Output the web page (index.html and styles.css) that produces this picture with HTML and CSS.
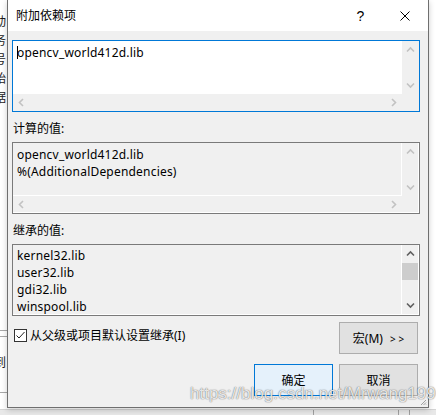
FILE: index.html
```html
<!DOCTYPE html>
<html lang="zh-CN">
<head>
    <meta charset="UTF-8">
    <title>附加依赖项</title>
    <link rel="stylesheet" href="styles.css">
</head>
<body>
    <!-- the window behind the dialog, only its edges show -->
    <div class="desktop">
        <div class="bg-glyphs bg-glyphs-top">
            <span>动</span><span>务</span><span>号</span><span>始</span><span>据</span>
        </div>
        <div class="bg-hline bg-hline-a"></div>
        <div class="bg-hline bg-hline-b"></div>
        <div class="bg-glyphs bg-glyphs-low"><span>到</span></div>
        <div class="bg-hline bg-hline-c"></div>
        <div class="bg-bottom">
            <div class="bg-vline bg-vline-a"></div>
            <div class="bg-vline bg-vline-b"></div>
            <div class="bg-vline bg-vline-c"></div>
        </div>
    </div>

    <div class="dialog">
        <div class="titlebar">
            <span class="title">附加依赖项</span>
            <span class="title-btn help">?</span>
            <span class="title-btn">
                <svg width="10" height="10" viewBox="0 0 10 10">
                    <path d="M0.5 0.5 L9.5 9.5 M9.5 0.5 L0.5 9.5" stroke="#000" stroke-width="1" fill="none"/>
                </svg>
            </span>
        </div>

        <div class="content">
            <div class="box box-edit">
                <div class="box-text"><span class="caret"></span>opencv_world412d.lib</div>
                <div class="vscroll">
                    <svg class="arrow" width="17" height="17" viewBox="0 0 17 17"><path d="M5 10.5 L8.5 7 L12 10.5"/></svg>
                    <svg class="arrow" width="17" height="17" viewBox="0 0 17 17"><path d="M5 6.5 L8.5 10 L12 6.5"/></svg>
                </div>
                <div class="hscroll">
                    <svg class="arrow" width="17" height="17" viewBox="0 0 17 17"><path d="M10 5 L6.5 8.5 L10 12"/></svg>
                    <svg class="arrow" width="17" height="17" viewBox="0 0 17 17"><path d="M7 5 L10.5 8.5 L7 12"/></svg>
                </div>
                <div class="corner"></div>
            </div>

            <div class="label">计算的值:</div>
            <div class="box box-readonly">
                <div class="box-text">
                    <div>opencv_world412d.lib</div>
                    <div>%(AdditionalDependencies)</div>
                </div>
                <div class="vscroll">
                    <svg class="arrow" width="17" height="17" viewBox="0 0 17 17"><path d="M5 10.5 L8.5 7 L12 10.5"/></svg>
                    <svg class="arrow" width="17" height="17" viewBox="0 0 17 17"><path d="M5 6.5 L8.5 10 L12 6.5"/></svg>
                </div>
                <div class="hscroll">
                    <svg class="arrow" width="17" height="17" viewBox="0 0 17 17"><path d="M10 5 L6.5 8.5 L10 12"/></svg>
                    <svg class="arrow" width="17" height="17" viewBox="0 0 17 17"><path d="M7 5 L10.5 8.5 L7 12"/></svg>
                </div>
                <div class="corner"></div>
            </div>

            <div class="label">继承的值:</div>
            <div class="box box-list">
                <div class="box-text">
                    <div>kernel32.lib</div>
                    <div>user32.lib</div>
                    <div>gdi32.lib</div>
                    <div>winspool.lib</div>
                </div>
                <div class="vscroll vscroll-active">
                    <svg class="arrow" width="17" height="17" viewBox="0 0 17 17"><path d="M5 10.5 L8.5 7 L12 10.5"/></svg>
                    <div class="thumb"></div>
                    <svg class="arrow arrow-down" width="17" height="17" viewBox="0 0 17 17"><path d="M5 6.5 L8.5 10 L12 6.5"/></svg>
                </div>
            </div>

            <div class="row-macro">
                <label class="inherit">
                    <span class="checkbox">
                        <svg width="11" height="11" viewBox="0 0 11 11">
                            <path d="M1.5 5.5 L4 8 L9.5 2" stroke="#222" stroke-width="1" fill="none"/>
                        </svg>
                    </span>
                    从父级或项目默认设置继承(I)
                </label>
                <button class="btn">宏(M) <span class="chevrons">&gt; &gt;</span></button>
            </div>

            <div class="row-actions">
                <button class="btn btn-default">确定</button>
                <button class="btn">取消</button>
            </div>
        </div>

        <svg class="grip" width="7" height="7" viewBox="0 0 7 7">
            <path d="M6 1 L1 6 M6 3.5 L3.5 6 M6 5.5 L5.5 6" stroke="#a0a0a0" stroke-width="1" fill="none"/>
        </svg>
    </div>

    <div class="watermark">https://blog.csdn.net/Mrwang1996</div>
</body>
</html>
```

FILE: styles.css
```css
body {
    margin: 0;
    width: 436px;
    height: 415px;
    overflow: hidden;
    position: relative;
    background-color: #fff;
    font-family: "Noto Sans", "Noto Sans CJK SC", sans-serif;
    font-size: 12px;
    color: #000;
}

/* background window */
.desktop {
    position: absolute;
    left: 0;
    top: 0;
    width: 436px;
    height: 415px;
}
.bg-glyphs {
    position: absolute;
    left: -6px;
    font-family: "Noto Sans CJK SC", sans-serif;
    font-size: 12px;
    line-height: 19px;
    color: #1a1a1a;
}
.bg-glyphs span {
    display: block;
}
.bg-glyphs-top {
    top: 11px;
}
.bg-glyphs-low {
    top: 352px;
}
.bg-hline {
    position: absolute;
    left: 0;
    width: 8px;
    height: 1px;
    background-color: #a8a8a8;
}
.bg-hline-a {
    top: 330px;
}
.bg-hline-b {
    top: 336px;
}
.bg-hline-c {
    top: 392px;
}
.bg-bottom {
    position: absolute;
    left: 0;
    top: 409px;
    width: 436px;
    height: 6px;
    background-color: #e8e8e8;
    border-top: 1px solid #d4d4d4;
}
.bg-vline {
    position: absolute;
    top: 0;
    width: 1px;
    height: 6px;
    background-color: #a0a0a0;
}
.bg-vline-a {
    left: 313px;
}
.bg-vline-b {
    left: 398px;
}
.bg-vline-c {
    left: 409px;
}

/* dialog */
.dialog {
    position: absolute;
    left: 7px;
    top: 0;
    width: 420px;
    height: 407px;
    border: 1px solid #6f6f6f;
    border-top: none;
    background-color: #f0f0f0;
    box-shadow: 0 2px 6px rgba(0,0,0,0.2);
    display: flex;
    flex-direction: column;
}
.titlebar {
    height: 31px;
    background-color: #fff;
    display: flex;
    align-items: center;
    padding-left: 8px;
}
.title {
    flex: 1;
    line-height: 17px;
    margin-top: -1px;
}
.title-btn {
    width: 46px;
    height: 31px;
    display: flex;
    align-items: center;
    justify-content: center;
}
.help {
    font-family: "Liberation Sans", sans-serif;
    font-size: 14px;
    padding-left: 3px;
    box-sizing: border-box;
}

.content {
    padding: 9px 8px 0 4px;
}
.label {
    line-height: 17px;
    margin: 8px 0 5px;
    padding-left: 1px;
}

/* list / edit boxes */
.box {
    height: 72px;
    box-sizing: border-box;
    border: 1px solid #7a7a7a;
    display: grid;
    grid-template-columns: 1fr 17px;
    grid-template-rows: 1fr 17px;
}
.box-edit {
    border-color: #0078d7;
}
.box-readonly,
.box-list {
    box-shadow: inset -1px -1px 0 #fff;
}
.box-list {
    grid-template-rows: 1fr;
}
.box-text {
    padding: 3px 4px 0;
    line-height: 17px;
    letter-spacing: 0.2px;
    white-space: nowrap;
    overflow: hidden;
    position: relative;
}
.box-edit .box-text {
    background-color: #fff;
}
.box-readonly .box-text {
    border-right: 1px solid #fff;
    border-bottom: 1px solid #fff;
}
.box-list .box-text {
    padding-top: 2px;
    border-right: 1px solid #fff;
}
.caret {
    position: absolute;
    left: 4px;
    top: 5px;
    width: 1px;
    height: 13px;
    background-color: #000;
}

.vscroll {
    display: flex;
    flex-direction: column;
    justify-content: space-between;
}
.hscroll {
    display: flex;
    justify-content: space-between;
}
.arrow {
    display: block;
}
.arrow path {
    fill: none;
    stroke: #c2c2c2;
    stroke-width: 1.6;
}
.vscroll-active .arrow path {
    stroke: #606060;
}
.vscroll-active {
    justify-content: flex-start;
}
.thumb {
    height: 17px;
    margin: 1px 1px 0 0;
    background-color: #cdcdcd;
}
.arrow-down {
    margin-top: auto;
    margin-bottom: 1px;
}

/* checkbox + macro button */
.row-macro {
    display: flex;
    justify-content: space-between;
    align-items: flex-start;
    margin-top: 6px;
}
.inherit {
    display: flex;
    align-items: center;
    gap: 3px;
    margin: 7px 0 0 2px;
    line-height: 13px;
}
.checkbox {
    width: 13px;
    height: 13px;
    box-sizing: border-box;
    border: 1px solid #333;
    background-color: #fff;
    display: flex;
    align-items: center;
    justify-content: center;
}
.checkbox svg {
    display: block;
}

.btn {
    width: 79px;
    height: 32px;
    margin-right: 2px;
    padding: 0;
    border: 1px solid #adadad;
    background-color: #e1e1e1;
    font-family: "Noto Sans", "Noto Sans CJK SC", sans-serif;
    font-size: 12px;
    color: #000;
}
.chevrons {
    font-size: 10px;
    margin-left: 4px;
}
.btn-default {
    border-color: #0078d7;
    background-color: #e5f1fb;
}
.row-actions {
    display: flex;
    justify-content: flex-end;
    gap: 4px;
    margin-top: 10px;
}

.grip {
    position: absolute;
    right: 1px;
    bottom: 1px;
}

.watermark {
    position: absolute;
    left: 190px;
    top: 384px;
    font-family: "Liberation Sans", sans-serif;
    font-size: 17px;
    color: rgba(255,255,255,0.85);
    text-shadow: 0 0 1px rgba(0,0,0,0.6), 0 0 2px rgba(0,0,0,0.2);
    white-space: nowrap;
}
```
